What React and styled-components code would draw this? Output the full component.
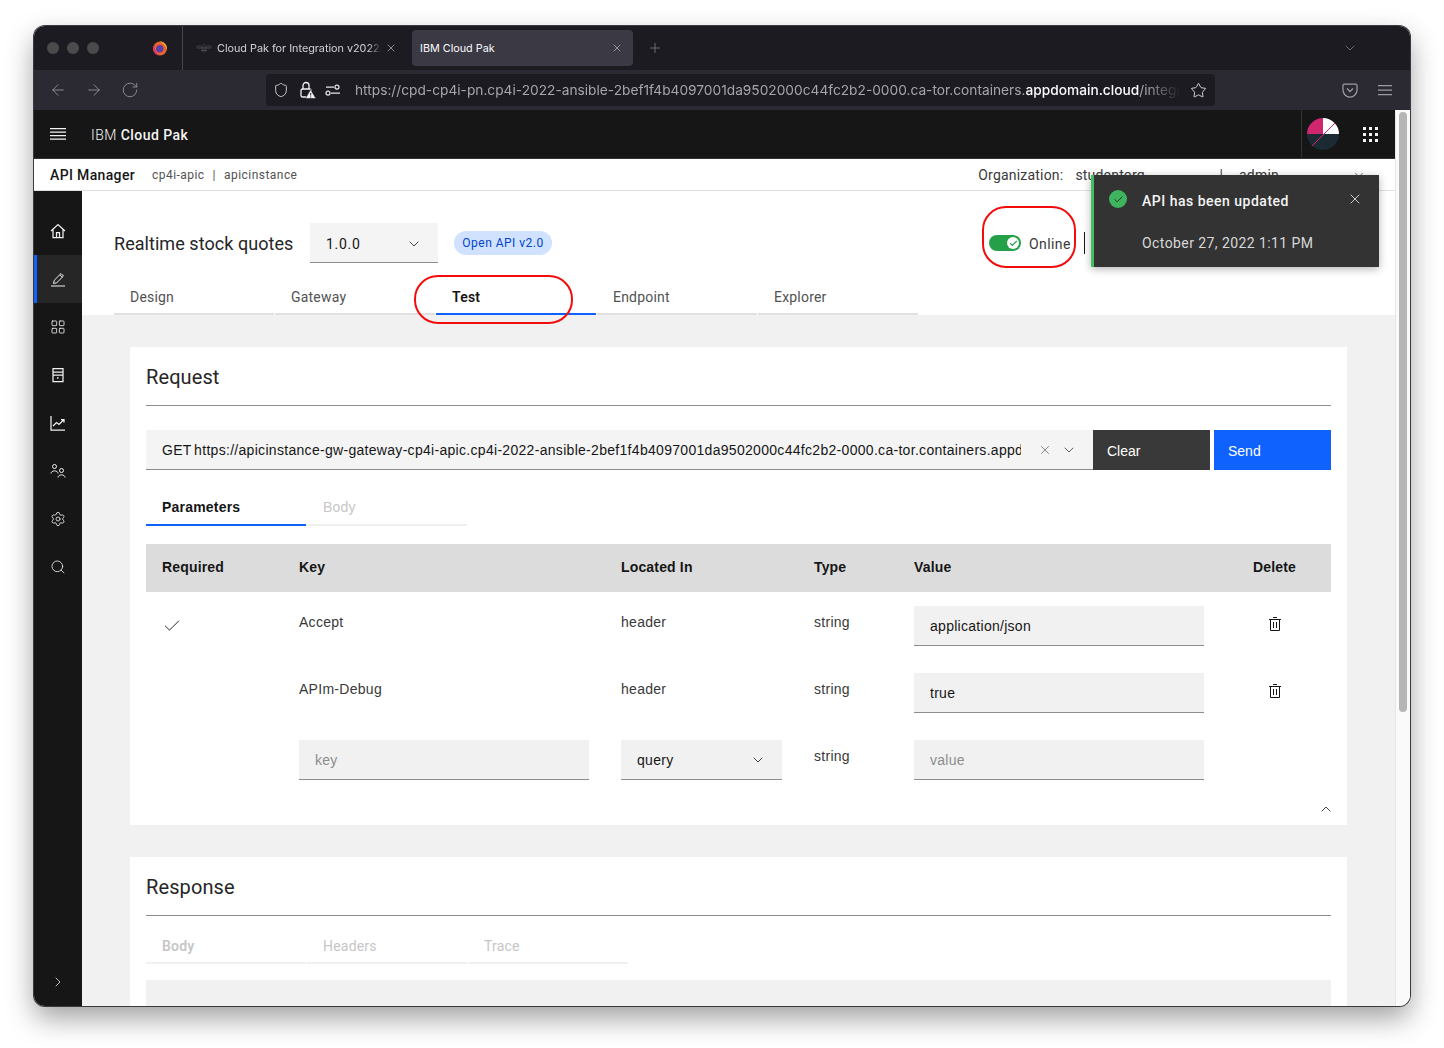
import React from "react";
import styled, { createGlobalStyle } from "styled-components";
import {
  ArrowLeft,
  ArrowRight,
  Check,
  ChevronDown,
  ChevronRight,
  ChevronUp,
  LayoutGrid,
  Plus,
  RotateCw,
  Search,
  Settings,
  Shield,
  Star,
  X,
} from "lucide-react";

const PLEX = `"Roboto", "Liberation Sans", sans-serif`;
const HELV = `"Liberation Sans", Arial, sans-serif`;
const SYSTEM = `"Inter", "Liberation Sans", sans-serif`;

const GlobalStyle = createGlobalStyle`
  html, body { margin: 0; padding: 0; background: #fff; }
  * { box-sizing: border-box; }
  body { font-family: ${PLEX}; color: #161616; }
`;

const Page = styled.div`
  height: 1048px;
  padding: 26px 34px 0;
  overflow: hidden;
`;

const Window = styled.div`
  position: relative;
  width: 1376px;
  height: 980px;
  border-radius: 11px;
  overflow: hidden;
  display: flex;
  flex-direction: column;
  box-shadow: 0 0 0 1px #3b3b3f, 0 12px 28px rgba(0, 0, 0, 0.38);
`;

/* browser chrome */
const TabStrip = styled.div`
  height: 44px;
  background: #1c1b22;
  display: flex;
  align-items: center;
  flex: none;
`;

const Lights = styled.div`
  display: flex;
  gap: 8px;
  padding-left: 13px;
  width: 118px;
`;

const Light = styled.span`
  width: 12px;
  height: 12px;
  border-radius: 50%;
  background: #4b4b4e;
`;

const Fox = styled.div`
  width: 30px;
  display: flex;
`;

const TabSep = styled.div`
  width: 1px;
  height: 44px;
  background: #45454a;
  margin-right: 13px;
`;

const BrowserTab = styled.div`
  display: flex;
  align-items: center;
  height: 36px;
  border-radius: 4px;
  font: 10.8px ${SYSTEM};
  color: #fbfbfe;
  background: ${(p) => (p.$active ? "#3a3944" : "transparent")};
  width: ${(p) => p.$w}px;
  padding-left: ${(p) => (p.$active ? 8 : 0)}px;
  margin-right: ${(p) => p.$mr || 0}px;
`;

const TabLabel = styled.span`
  flex: 1;
  white-space: nowrap;
  overflow: hidden;
  padding-top: 1px;
  opacity: ${(p) => (p.$dim ? 0.8 : 1)};
  margin-left: ${(p) => (p.$dim ? 5 : 0)}px;
  -webkit-mask-image: ${(p) => (p.$dim ? "linear-gradient(to right, #000 92%, transparent)" : "none")};
  mask-image: ${(p) => (p.$dim ? "linear-gradient(to right, #000 92%, transparent)" : "none")};
`;

const TabClose = styled(X)`
  margin-right: ${(p) => p.$mr || 10}px;
  margin-left: ${(p) => p.$ml || 0}px;
  color: #d5d5d8;
  flex: none;
`;

const StripEnd = styled.div`
  margin-left: auto;
  margin-right: 52px;
  display: flex;
  color: #8f8f94;
`;

const UrlRow = styled.div`
  height: 40px;
  background: #2b2a33;
  display: flex;
  align-items: center;
  flex: none;
  color: #a6a6ab;
  padding-left: 15px;
`;

const NavButtons = styled.div`
  display: flex;
  gap: 18px;
  width: 217px;
`;

const UrlField = styled.div`
  width: 949px;
  height: 32px;
  background: #1c1b22;
  border-radius: 4px;
  display: flex;
  align-items: center;
  padding-left: 7px;
  color: #e3e3e6;
`;

const UrlIcons = styled.div`
  display: flex;
  align-items: center;
  gap: 9px;
  width: 82px;
  flex: none;
`;

const UrlText = styled.div`
  width: 825px;
  flex: none;
  white-space: nowrap;
  overflow: hidden;
  font: 13.72px ${SYSTEM};
  color: #a5a5aa;
  -webkit-mask-image: linear-gradient(to right, #000 96%, transparent);
  mask-image: linear-gradient(to right, #000 96%, transparent);

  b {
    font-weight: 500;
    color: #fbfbfe;
  }
`;

const StarWrap = styled.div`
  display: flex;
  margin-left: 10px;
`;

const UrlEnd = styled.div`
  display: flex;
  gap: 20px;
  margin-left: 127px;
  color: #9b9ba0;
`;

/* app frame */
const Viewport = styled.div`
  flex: 1;
  display: flex;
  min-height: 0;
`;

const App_ = styled.div`
  width: 1361px;
  display: flex;
  flex-direction: column;
  flex: none;
`;

const Scrollbar = styled.div`
  width: 15px;
  background: #fafafa;
  border-left: 1px solid #e6e6e6;
  padding: 2px 3px 0 3px;
`;

const Thumb = styled.div`
  width: 8px;
  height: 600px;
  border-radius: 4px;
  background: #b6b6b6;
`;

const Header = styled.div`
  height: 49px;
  background: #161616;
  border-bottom: 1px solid #333;
  display: flex;
  align-items: center;
  flex: none;
  padding-left: 16px;
  color: #f4f4f4;
`;

const Brand = styled.div`
  margin-left: 25px;
  padding-top: 1px;
  font-size: 14px;
  font-weight: 300;
  letter-spacing: 0.46px;
  color: #f4f4f4;
  b {
    font-weight: 500;
  }
`;

const HeaderEnd = styled.div`
  margin-left: auto;
  height: 48px;
  display: flex;
  align-items: center;
  border-left: 1px solid #333;
  padding-left: 5px;
  padding-right: 9px;
  gap: 16px;
`;

const Waffle = styled.div`
  display: grid;
  grid-template-columns: repeat(3, 3px);
  gap: 3px;
  padding: 8px;

  span {
    width: 3px;
    height: 3px;
    background: #f4f4f4;
  }
`;

const SubHeader = styled.div`
  height: 32px;
  background: #fff;
  border-bottom: 1px solid #e0e0e0;
  display: flex;
  align-items: center;
  justify-content: space-between;
  flex: none;
  padding: 0 29px 0 16px;
`;

const SubLeft = styled.div`
  display: flex;
  align-items: center;
  font-size: 12px;
  color: #525252;
  letter-spacing: 0.46px;
`;

const AppName = styled.b`
  font-size: 14px;
  font-weight: 500;
  letter-spacing: 0.35px;
  color: #161616;
  width: 102px;
`;

const Pipe = styled.span`
  margin: 0 8px;
`;

const SubRight = styled.div`
  display: flex;
  align-items: center;
  font-size: 14px;
  color: #393939;
  letter-spacing: 0.2px;
`;

const OrgValue = styled.span`
  margin-left: 12px;
  width: 144px;
`;

const Admin = styled.span`
  margin-left: 16px;
  width: 113px;
`;

const Body = styled.div`
  flex: 1;
  display: flex;
  min-height: 0;
`;

const Sidebar = styled.nav`
  width: 48px;
  background: #161616;
  display: flex;
  flex-direction: column;
  padding-top: 16px;
  flex: none;
`;

const SideItem = styled.div`
  height: 48px;
  display: flex;
  align-items: center;
  justify-content: center;
  color: #f0f0f0;
  background: ${(p) => (p.$active ? "#262626" : "transparent")};
  border-left: 3px solid ${(p) => (p.$active ? "#0f62fe" : "transparent")};
  padding-right: 3px;
`;

const SideFoot = styled.div`
  margin-top: auto;
  height: 48px;
  display: flex;
  align-items: center;
  justify-content: center;
  color: #e8e8e8;
`;

const Main = styled.main`
  flex: 1;
  background: #f1f1f1;
  overflow: hidden;
`;

const TopBand = styled.div`
  height: 124px;
  background: #fff;
  padding: 32px 0 0 32px;
`;

const TitleRow = styled.div`
  display: flex;
  align-items: center;
  height: 40px;
`;

const ApiTitle = styled.h1`
  margin: 0;
  width: 196px;
  font-size: 18px;
  font-weight: 400;
  letter-spacing: 0.05px;
  color: #262626;
`;

const VersionSelect = styled.div`
  width: 128px;
  height: 40px;
  background: #f4f4f4;
  border-bottom: 1px solid #8d8d8d;
  display: flex;
  align-items: center;
  justify-content: space-between;
  padding: 2px 16px 0;
  font-size: 14px;
  letter-spacing: 0.7px;
`;

const Badge = styled.span`
  margin-left: 16px;
  height: 24px;
  width: 98px;
  display: flex;
  align-items: center;
  justify-content: center;
  border-radius: 12px;
  background: #d0e2ff;
  color: #0043ce;
  font-size: 12px;
  letter-spacing: 0.48px;
`;

const Status = styled.div`
  margin-left: 437px;
  display: flex;
  align-items: center;
  font-size: 14px;
  letter-spacing: 0.42px;
  color: #393939;
`;

const OnlineLabel = styled.span`
  padding-top: 2px;
`;

const Toggle = styled.div`
  width: 32px;
  height: 16px;
  border-radius: 8px;
  background: #24a148;
  display: flex;
  align-items: center;
  justify-content: flex-end;
  padding-right: 2px;
  margin-right: 8px;
`;

const Knob = styled.span`
  width: 12px;
  height: 12px;
  border-radius: 50%;
  background: #fff;
  display: flex;
  align-items: center;
  justify-content: center;
  color: #24a148;
`;

const Caret = styled.span`
  width: 1px;
  height: 22px;
  background: #161616;
  margin-left: 13px;
`;

const Tabs = styled.div`
  display: flex;
  gap: ${(p) => p.$gap ?? 1}px;
  margin-top: ${(p) => p.$mt || 0}px;
`;

const Tab = styled.div`
  width: 160px;
  height: ${(p) => p.$h || 33}px;
  padding: 0 0 ${(p) => p.$pb || 0}px 16px;
  display: flex;
  align-items: center;
  font-size: 14px;
  letter-spacing: 0.2px;
  color: ${(p) => (p.$disabled ? "#c6c6c6" : p.$active ? "#161616" : "#525252")};
  font-weight: ${(p) => (p.$active || p.$strong ? 600 : 400)};
  font-family: ${(p) => (p.$helv ? HELV : PLEX)};
  border-bottom: 2px solid
    ${(p) => (p.$active && !p.$disabled ? "#0f62fe" : p.$disabled ? "#f0f0f0" : "#e0e0e0")};
`;

const Card = styled.section`
  margin: 32px 48px 0;
  background: #fff;
  padding: 0 16px;
  height: ${(p) => p.$h}px;
  position: relative;
`;

const CardTitle = styled.h2`
  margin: 0;
  height: 59px;
  line-height: 60px;
  font-size: 20px;
  font-weight: 400;
  color: #262626;
  letter-spacing: 0.1px;
  border-bottom: 1px solid #8d8d8d;
`;

const RequestBar = styled.div`
  display: flex;
  margin-top: 24px;
  height: 40px;
`;

const UrlInput = styled.div`
  width: 947px;
  background: #f4f4f4;
  border-bottom: 1px solid #8d8d8d;
  display: flex;
  align-items: center;
  padding-left: 16px;
  font: 14px ${HELV};
  letter-spacing: 0.3px;
`;

const UrlValue = styled.span`
  width: 859px;
  flex: none;
  white-space: nowrap;
  overflow: hidden;
  word-spacing: -1.5px;
`;

const UrlActions = styled.div`
  display: flex;
  align-items: center;
  gap: 9px;
  margin-left: 17px;
  color: #393939;
`;

const ActionButton = styled.div`
  width: 117px;
  margin-left: ${(p) => p.$ml || 0}px;
  background: ${(p) => (p.$primary ? "#0f62fe" : "#393939")};
  color: #fff;
  font: 14px ${HELV};
  display: flex;
  align-items: center;
  padding: 2px 0 0 14px;
`;

const TableHead = styled.div`
  margin-top: 18px;
  height: 48px;
  padding-bottom: 2px;
  background: #dcdcdc;
  display: grid;
  grid-template-columns: 153px 322px 193px 100px 339px 1fr;
  align-items: center;
  font: 700 14px ${HELV};
  letter-spacing: 0.16px;
  color: #161616;

  span:first-child {
    padding-left: 16px;
  }
`;

const ParamRow = styled.div`
  display: grid;
  grid-template-columns: 153px 322px 193px 100px 339px 1fr;
  height: 67px;
  padding-top: 14px;
  font: 14px ${HELV};
  letter-spacing: 0.28px;
  color: #393939;
`;

const Cell = styled.div`
  padding-top: 8px;
`;

const CheckCell = styled.div`
  padding: 10px 0 0 16px;
  color: #161616;
`;

const TrashCell = styled.div`
  padding: 10px 0 0 14px;
  color: #161616;
`;

const FieldBox = styled.div`
  width: ${(p) => p.$w || 290}px;
  height: 40px;
  background: #f1f1f1;
  border-bottom: 1px solid #8d8d8d;
  display: flex;
  align-items: center;
  justify-content: space-between;
  padding: 0 16px;
  color: ${(p) => (p.$placeholder ? "#8d8d8d" : "#161616")};
`;

const Collapse = styled.div`
  position: absolute;
  right: 13px;
  bottom: 8px;
  display: flex;
  color: #161616;
`;

const GreyBlock = styled.div`
  height: 60px;
  margin-top: 16px;
  background: #f1f1f1;
`;

/* overlays */
const Annotation = styled.div`
  position: absolute;
  left: ${(p) => p.$x}px;
  top: ${(p) => p.$y}px;
  width: ${(p) => p.$w}px;
  height: ${(p) => p.$h}px;
  border: 2px solid #f40c0c;
  border-radius: 24px;
  pointer-events: none;
`;

const Toast = styled.div`
  position: absolute;
  left: 1057px;
  top: 149px;
  width: 288px;
  height: 92px;
  background: #333;
  border-left: 3px solid #42be65;
  box-shadow: 0 2px 8px rgba(0, 0, 0, 0.3);
  color: #f4f4f4;
  display: grid;
  grid-template-columns: 48px 1fr 34px;
  grid-template-rows: 50px 1fr;
  font-size: 14px;
  letter-spacing: 0.42px;
`;

const ToastIcon = styled.div`
  padding: 15px 0 0 15px;
`;

const ToastDot = styled.span`
  width: 18px;
  height: 18px;
  border-radius: 50%;
  background: #3fb45f;
  display: flex;
  align-items: center;
  justify-content: center;
  color: #12301c;
`;

const ToastTitle = styled.div`
  font-weight: 500;
  letter-spacing: 0.5px;
  padding-top: 18px;
`;

const ToastClose = styled.div`
  padding: 16px 0 0 2px;
  color: #f4f4f4;
`;

const ToastTime = styled.div`
  grid-column: 2 / 4;
  padding-top: 10px;
  color: #d8d8d8;
`;

const ic = { fill: "none", stroke: "currentColor", strokeWidth: 1.25 };

const Hamburger = () => (
  <svg width="16" height="16" viewBox="0 0 16 16" {...ic}>
    <path d="M0 2.500h16M0 6h16M0 9.500h16M0 13h16" />
  </svg>
);

const MenuLines = () => (
  <svg width="14" height="16" viewBox="0 0 14 16" {...ic}>
    <path d="M0 3.500h14M0 8h14M0 12.500h14" />
  </svg>
);

const FoxLogo = () => (
  <svg width="16" height="16" viewBox="0 0 16 16">
    <circle cx="8" cy="8.600" r="7" fill="#e8642c" />
    <path d="M8 1.500c3.600 0 7 2.700 7 7 0 .5-.1 1-.2 1.500C14 5.800 11 3.600 8 1.500z" fill="#f6a92e" />
    <path d="M3.200 4c-1 3-.2 8 4.600 11.300C4 15 1 12 1 8.600 1 6.800 2 5 3.200 4z" fill="#d9366c" />
    <circle cx="7.800" cy="8.800" r="3.700" fill="#5b3fa8" />
  </svg>
);

const Bee = () => (
  <svg width="16" height="11" viewBox="0 0 16 11">
    <ellipse cx="8" cy="5.500" rx="3" ry="5" fill="#26262b" />
    <ellipse cx="3.500" cy="4" rx="3.500" ry="2" fill="#303036" />
    <ellipse cx="12.500" cy="4" rx="3.500" ry="2" fill="#303036" />
    <path d="M5 5h6M5 7.500h6" stroke="#5c5c60" strokeWidth="0.800" />
  </svg>
);

const LockWarn = () => (
  <svg width="18" height="18" viewBox="0 0 18 18" fill="none">
    <path d="M5 8V4.500a3 3 0 0 1 6 0V8" stroke="#f2f2f2" strokeWidth="1.300" />
    <rect x="3" y="8" width="10" height="8" rx="1.500" stroke="#f2f2f2" strokeWidth="1.300" />
    <path d="M12.500 8.500 18 17.500H7.500z" fill="#f2f2f2" stroke="#1c1b22" strokeWidth="0.600" />
    <path d="M12.700 12v2.500M12.700 15.500v1" stroke="#1c1b22" strokeWidth="1" />
  </svg>
);

const PermIcon = () => (
  <svg width="16" height="16" viewBox="0 0 16 16" {...ic}>
    <path d="M1 5h8M6 11h9" />
    <circle cx="12" cy="5" r="2" />
    <circle cx="3" cy="11" r="2" />
  </svg>
);

const Pocket = () => (
  <svg width="16" height="16" viewBox="0 0 16 16" {...ic}>
    <path d="M2.500 2h11A1.500 1.500 0 0 1 15 3.500V8a7 7 0 0 1-14 0V3.500A1.500 1.500 0 0 1 2.500 2z" />
    <path d="M5 6.500 8 9.500l3-3" />
  </svg>
);

const Avatar = () => (
  <svg width="32" height="32" viewBox="0 0 32 32">
    <path d="M16 16V0A16 16 0 0 0 0 16z" fill="#d02670" />
    <path d="M16 16V0a16 16 0 0 1 16 16z" fill="#fff" />
    <path d="M0 16a16 16 0 0 0 32 0z" fill="#1b2a33" />
    <path d="M28 5 5 28" stroke="#d02670" strokeWidth="1" />
  </svg>
);

const HomeIcon = () => (
  <svg width="16" height="16" viewBox="0 0 16 16" {...ic}>
    <path d="M1 8 8 1.500 15 8M3 6.500V14.500H13V6.500M6.500 14.500V9.500h3v5" />
  </svg>
);

const PenIcon = () => (
  <svg width="16" height="16" viewBox="0 0 16 16" {...ic} strokeWidth={1}>
    <path d="M1 15h14M3.500 12.500l.8-3.300L11 2.500l2.500 2.500-6.700 6.700zM9.800 3.700l2.500 2.500" />
  </svg>
);

const ServerIcon = () => (
  <svg width="16" height="16" viewBox="0 0 16 16" {...ic}>
    <path d="M3 1.500h10v13H3zM3 5h10M3 8h10" />
    <path d="M7 11h1.500" strokeWidth="1.400" />
  </svg>
);

const ChartIcon = () => (
  <svg width="16" height="16" viewBox="0 0 16 16" {...ic}>
    <path d="M1 1v14h14M3 11l3.500-3.500 2.500 2L14 4.500M11 4.500h3v3" />
  </svg>
);

const UsersIcon = () => (
  <svg width="16" height="16" viewBox="0 0 16 16" {...ic} strokeWidth={1}>
    <circle cx="4.500" cy="3.500" r="2" />
    <circle cx="11.500" cy="7.500" r="2" />
    <path d="M1 10.500c0-3.500 7-3.500 7 0M8 14.500c0-3.500 7-3.500 7 0" />
  </svg>
);

const TrashIcon = () => (
  <svg width="16" height="16" viewBox="0 0 16 16" {...ic} strokeWidth={1}>
    <path d="M2 3.500h12M6 1.500h4M3.500 3.500v11h9v-11M6.500 6v6M9.500 6v6" />
  </svg>
);

const params = [
  { required: true, key: "Accept", value: "application/json" },
  { required: false, key: "APIm-Debug", value: "true" },
];

const waffle = Array.from({ length: 9 });

const App = () => (
  <>
    <GlobalStyle />
    <Page>
      <Window>
        <TabStrip>
          <Lights>
            <Light />
            <Light />
            <Light />
          </Lights>
          <Fox>
            <FoxLogo />
          </Fox>
          <TabSep />
          <BrowserTab $w={216}>
            <Bee />
            <TabLabel $dim>Cloud Pak for Integration v2022.3</TabLabel>
            <TabClose size={12} strokeWidth={1.2} $ml={3} $mr={15} />
          </BrowserTab>
          <BrowserTab $active $w={221} $mr={14}>
            <TabLabel>IBM Cloud Pak</TabLabel>
            <TabClose size={12} strokeWidth={1.2} />
          </BrowserTab>
          <Plus size={16} strokeWidth={1} color="#8f8f94" />
          <StripEnd>
            <ChevronDown size={16} strokeWidth={1} />
          </StripEnd>
        </TabStrip>
        <UrlRow>
          <NavButtons>
            <ArrowLeft size={18} strokeWidth={1} />
            <ArrowRight size={18} strokeWidth={1} />
            <RotateCw size={18} strokeWidth={1} />
          </NavButtons>
          <UrlField>
            <UrlIcons>
              <Shield size={16} strokeWidth={1.300} />
              <LockWarn />
              <PermIcon />
            </UrlIcons>
            <UrlText>
              https://cpd-cp4i-pn.cp4i-2022-ansible-2bef1f4b4097001da9502000c44fc2b2-0000.ca-tor.containers.
              <b>appdomain.cloud</b>/integration/apis/cp4i-apic
            </UrlText>
            <StarWrap>
              <Star size={17} strokeWidth={1.300} />
            </StarWrap>
          </UrlField>
          <UrlEnd>
            <Pocket />
            <MenuLines />
          </UrlEnd>
        </UrlRow>
        <Viewport>
          <App_>
            <Header>
              <Hamburger />
              <Brand>
                IBM <b>Cloud Pak</b>
              </Brand>
              <HeaderEnd>
                <Avatar />
                <Waffle>
                  {waffle.map((_, i) => (
                    <span key={i} />
                  ))}
                </Waffle>
              </HeaderEnd>
            </Header>
            <SubHeader>
              <SubLeft>
                <AppName>API Manager</AppName>
                cp4i-apic<Pipe>|</Pipe>apicinstance
              </SubLeft>
              <SubRight>
                Organization:
                <OrgValue>studentorg</OrgValue>|<Admin>admin</Admin>
                <ChevronDown size={14} strokeWidth={1.2} />
              </SubRight>
            </SubHeader>
            <Body>
              <Sidebar>
                <SideItem>
                  <HomeIcon />
                </SideItem>
                <SideItem $active>
                  <PenIcon />
                </SideItem>
                <SideItem>
                  <LayoutGrid size={16} strokeWidth={1.25} />
                </SideItem>
                <SideItem>
                  <ServerIcon />
                </SideItem>
                <SideItem>
                  <ChartIcon />
                </SideItem>
                <SideItem>
                  <UsersIcon />
                </SideItem>
                <SideItem>
                  <Settings size={16} strokeWidth={1.25} />
                </SideItem>
                <SideItem>
                  <Search size={16} strokeWidth={1.25} />
                </SideItem>
                <SideFoot>
                  <ChevronRight size={16} strokeWidth={1.2} />
                </SideFoot>
              </Sidebar>
              <Main>
                <TopBand>
                  <TitleRow>
                    <ApiTitle>Realtime stock quotes</ApiTitle>
                    <VersionSelect>
                      1.0.0
                      <ChevronDown size={16} strokeWidth={1.2} />
                    </VersionSelect>
                    <Badge>Open API v2.0</Badge>
                    <Status>
                      <Toggle>
                        <Knob>
                          <Check size={9} strokeWidth={3} />
                        </Knob>
                      </Toggle>
                      <OnlineLabel>Online</OnlineLabel>
                      <Caret />
                    </Status>
                  </TitleRow>
                  <Tabs $mt={19}>
                    <Tab $pb={2}>Design</Tab>
                    <Tab $pb={2}>Gateway</Tab>
                    <Tab $pb={2} $active>
                      Test
                    </Tab>
                    <Tab $pb={2}>Endpoint</Tab>
                    <Tab $pb={2}>Explorer</Tab>
                  </Tabs>
                </TopBand>
                <Card $h={478}>
                  <CardTitle>Request</CardTitle>
                  <RequestBar>
                    <UrlInput>
                      <UrlValue>
                        GET https://apicinstance-gw-gateway-cp4i-apic.cp4i-2022-ansible-2bef1f4b4097001da9502000c44fc2b2-0000.ca-tor.containers.appdomain.cloud
                      </UrlValue>
                      <UrlActions>
                        <X size={14} strokeWidth={1} />
                        <ChevronDown size={16} strokeWidth={1.2} />
                      </UrlActions>
                    </UrlInput>
                    <ActionButton>Clear</ActionButton>
                    <ActionButton $primary $ml={4}>
                      Send
                    </ActionButton>
                  </RequestBar>
                  <Tabs $mt={20}>
                    <Tab $active $helv $h={36}>
                      Parameters
                    </Tab>
                    <Tab $disabled $helv $h={36}>
                      Body
                    </Tab>
                  </Tabs>
                  <TableHead>
                    <span>Required</span>
                    <span>Key</span>
                    <span>Located In</span>
                    <span>Type</span>
                    <span>Value</span>
                    <span>Delete</span>
                  </TableHead>
                  {params.map((row) => (
                    <ParamRow key={row.key}>
                      <CheckCell>{row.required && <Check size={20} strokeWidth={1.1} />}</CheckCell>
                      <Cell>{row.key}</Cell>
                      <Cell>header</Cell>
                      <Cell>string</Cell>
                      <FieldBox>{row.value}</FieldBox>
                      <TrashCell>
                        <TrashIcon />
                      </TrashCell>
                    </ParamRow>
                  ))}
                  <ParamRow>
                    <div />
                    <FieldBox $placeholder>key</FieldBox>
                    <FieldBox $w={161}>
                      query
                      <ChevronDown size={16} strokeWidth={1.2} />
                    </FieldBox>
                    <Cell>string</Cell>
                    <FieldBox $placeholder>value</FieldBox>
                    <div />
                  </ParamRow>
                  <Collapse>
                    <ChevronUp size={16} strokeWidth={1.2} />
                  </Collapse>
                </Card>
                <Card $h={149}>
                  <CardTitle>Response</CardTitle>
                  <Tabs $mt={14}>
                    <Tab $disabled $strong $h={34}>
                      Body
                    </Tab>
                    <Tab $disabled $h={34}>
                      Headers
                    </Tab>
                    <Tab $disabled $h={34}>
                      Trace
                    </Tab>
                  </Tabs>
                  <GreyBlock />
                </Card>
              </Main>
            </Body>
          </App_>
          <Scrollbar>
            <Thumb />
          </Scrollbar>
        </Viewport>
        <Annotation $x={948} $y={180} $w={94} $h={62} />
        <Annotation $x={380} $y={249} $w={159} $h={49} />
        <Toast>
          <ToastIcon>
            <ToastDot>
              <Check size={11} strokeWidth={2} />
            </ToastDot>
          </ToastIcon>
          <ToastTitle>API has been updated</ToastTitle>
          <ToastClose>
            <X size={16} strokeWidth={1.2} />
          </ToastClose>
          <div />
          <ToastTime>October 27, 2022 1:11 PM</ToastTime>
        </Toast>
      </Window>
    </Page>
  </>
);

export default App;
